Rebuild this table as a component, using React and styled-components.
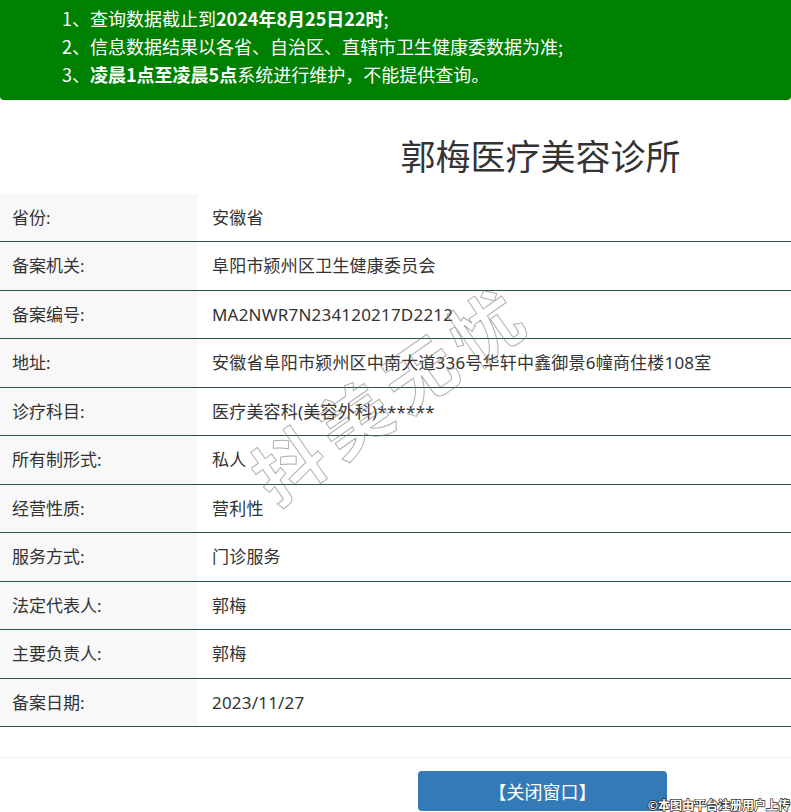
import React from "react";
import styled, { createGlobalStyle } from "styled-components";

const Global = createGlobalStyle`
  html, body { margin: 0; padding: 0; background: #fff; }
  body {
    font-family: "Noto Sans", "Noto Sans CJK SC", sans-serif;
    color: #333;
    overflow: hidden;
  }
`;

const Page = styled.div`
  position: relative;
  width: 791px;
  height: 812px;
  overflow: hidden;
`;

const Notice = styled.div`
  background: #008000;
  color: #fff;
  height: 100px;
  box-sizing: border-box;
  padding: 4px 0 0 62px;
  border-radius: 0 0 4px 4px;
  font-size: 18px;
  line-height: 28px;
  font-family: "Microsoft YaHei", "Noto Sans CJK SC", sans-serif;
`;

const NoticeLine = styled.div`
  white-space: nowrap;
  b { font-weight: 700; }
`;

const Title = styled.h1`
  margin: 0;
  height: 94px;
  box-sizing: border-box;
  padding: 32px 0 0 290px;
  text-align: center;
  font-size: 35px;
  line-height: 46px;
  font-weight: 400;
  color: #333;
  font-family: "Noto Sans CJK SC", sans-serif;
`;

const Table = styled.div`
  display: grid;
  grid-template-columns: 197px 1fr;
`;

const Label = styled.div`
  background: #f8f8f8;
  padding: 12px 0 12px 12px;
  font-size: 17px;
  line-height: 23.45px;
  border-bottom: 1px solid #2b5645;
  white-space: nowrap;
`;

const Value = styled.div`
  padding: 12px 0 12px 15px;
  font-size: 17px;
  line-height: 23.45px;
  letter-spacing: 0.2px;
  border-bottom: 1px solid #2b5645;
  white-space: nowrap;
`;

const Footer = styled.div`
  margin-top: 30px;
  border-top: 1px solid #eee;
  display: flex;
  justify-content: flex-start;
  padding: 13px 0 0 418px;
`;

const CloseButton = styled.button`
  width: 249px;
  height: 40px;
  border: none;
  border-radius: 4px;
  background: #337ab7;
  color: #fff;
  font-size: 18px;
  font-weight: 400;
  font-family: "Noto Sans CJK SC", sans-serif;
  padding: 0;
  cursor: pointer;
`;

const Watermark = styled.div`
  position: absolute;
  left: 258px;
  top: 432px;
  font-size: 70px;
  font-weight: 700;
  letter-spacing: 10px;
  font-family: "Noto Sans CJK SC", sans-serif;
  color: transparent;
  -webkit-text-stroke: 1px rgba(120, 120, 120, 0.6);
  transform: rotate(-35deg);
  transform-origin: left center;
  white-space: nowrap;
  pointer-events: none;
`;

const Credit = styled.div`
  position: absolute;
  right: 1px;
  bottom: 0;
  font-size: 12px;
  line-height: 15px;
  font-weight: 700;
  color: #fff;
  font-family: "Noto Sans CJK SC", sans-serif;
  -webkit-text-stroke: 1.4px #222;
  paint-order: stroke fill;
  white-space: nowrap;
`;

const rows = [
  ["省份:", "安徽省"],
  ["备案机关:", "阜阳市颍州区卫生健康委员会"],
  ["备案编号:", "MA2NWR7N234120217D2212"],
  ["地址:", "安徽省阜阳市颍州区中南大道336号华轩中鑫御景6幢商住楼108室"],
  ["诊疗科目:", "医疗美容科(美容外科)******"],
  ["所有制形式:", "私人"],
  ["经营性质:", "营利性"],
  ["服务方式:", "门诊服务"],
  ["法定代表人:", "郭梅"],
  ["主要负责人:", "郭梅"],
  ["备案日期:", "2023/11/27"],
];

export default function App() {
  return (
    <Page>
      <Global />
      <Notice>
        <NoticeLine>
          1、查询数据截止到<b>2024年8月25日22时</b>;
        </NoticeLine>
        <NoticeLine>2、信息数据结果以各省、自治区、直辖市卫生健康委数据为准;</NoticeLine>
        <NoticeLine>
          3、<b>凌晨1点至凌晨5点</b>系统进行维护，不能提供查询。
        </NoticeLine>
      </Notice>
      <Title>郭梅医疗美容诊所</Title>
      <Table>
        {rows.map(([k, v]) => (
          <React.Fragment key={k}>
            <Label>{k}</Label>
            <Value>{v}</Value>
          </React.Fragment>
        ))}
      </Table>
      <Footer>
        <CloseButton>【关闭窗口】</CloseButton>
      </Footer>
      <Watermark>抖美无忧</Watermark>
      <Credit>©本图由平台注册用户上传</Credit>
    </Page>
  );
}
